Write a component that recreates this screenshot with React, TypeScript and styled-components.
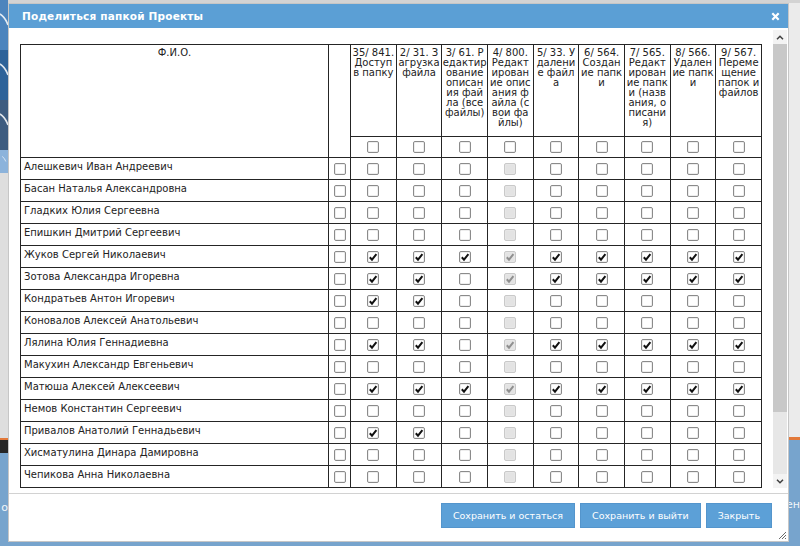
import React from "react";
import styled, { createGlobalStyle } from "styled-components";

const GlobalStyle = createGlobalStyle`
  html, body { margin: 0; padding: 0; }
  body {
    width: 800px;
    height: 546px;
    overflow: hidden;
    font-family: "DejaVu Sans", Verdana, sans-serif;
  }
`;

/* ---------- background page ---------- */

const Page = styled.div`
  position: relative;
  width: 800px;
  height: 546px;
  overflow: hidden;
  display: flex;
  background: #e9e9e9;
`;

const SideNav = styled.nav`
  width: 8px;
  display: flex;
  flex-direction: column;
`;

const NavBand = styled.div<{ $bg: string; $h?: number }>`
  flex: ${(p) => (p.$h ? "none" : "1")};
  height: ${(p) => (p.$h ? `${p.$h}px` : "auto")};
  background: ${(p) => p.$bg};
  overflow: hidden;
  display: flex;
  flex-direction: column;
  align-items: flex-end;
`;

const EdgeText = styled.span<{ $top: number }>`
  margin-top: ${(p) => p.$top}px;
  color: #f2f6fa;
  font-size: 11px;
  line-height: 12px;
  white-space: nowrap;
`;

const Workspace = styled.div`
  flex: 1;
  display: flex;
  flex-direction: column;
`;

const TopStrip = styled.div`
  height: 3px;
  background: #d3d3d3;
`;

const WorkArea = styled.div`
  flex: 1;
  background: #ebebeb;
`;

const AccentLine = styled.div`
  height: 3px;
  background: #e2793a;
`;

const BottomBand = styled.div`
  height: 106px;
  background: #77a4cd;
  display: flex;
  flex-direction: column;
  align-items: flex-end;
`;

const NavCurve = () => (
  <svg width="8" height="50" viewBox="0 0 8 50">
    <path d="M0 14 Q5 17 8 25" stroke="#ffffff" strokeWidth="1.6" fill="none" opacity="0.85" />
  </svg>
);

/* ---------- dialog ---------- */

const Dialog = styled.div`
  position: absolute;
  left: 8px;
  top: 3px;
  width: 781px;
  height: 539px;
  box-sizing: border-box;
  border: 1px solid #c6c6c6;
  background: #ffffff;
  display: flex;
  flex-direction: column;
`;

const TitleBar = styled.div`
  height: 24px;
  flex: none;
  background: #5b9fd5;
  display: flex;
  align-items: center;
  justify-content: space-between;
  padding: 0 8px 0 13px;
`;

const Title = styled.span`
  color: #ffffff;
  font-weight: bold;
  font-size: 10.5px;
  letter-spacing: 0.2px;
`;

const CloseButton = styled.span`
  display: flex;
  width: 9px;
  height: 9px;
`;

const Body = styled.div`
  flex: 1;
  min-height: 0;
  display: flex;
  padding: 2px 0 5px 0;
`;

const Viewport = styled.div`
  flex: 1;
  min-width: 0;
  overflow: hidden;
  padding: 14px 0 0 11px;
`;

const Scrollbar = styled.div`
  width: 14px;
  margin-right: 1px;
  display: flex;
  flex-direction: column;
  background: #e7e7e7;
`;

const ScrollButton = styled.div`
  height: 14px;
  flex: none;
  display: flex;
  align-items: center;
  justify-content: center;
  background: #f3f3f3;
`;

const Track = styled.div`
  flex: 1;
  display: flex;
  flex-direction: column;
`;

const Thumb = styled.div`
  height: 368px;
  background: #c8c8c8;
`;

const Footer = styled.div`
  height: 48px;
  flex: none;
  box-sizing: border-box;
  border-top: 1px solid #d2d2d2;
  display: flex;
  justify-content: flex-end;
  align-items: flex-start;
  gap: 5px;
  padding: 9px 16px 0 0;
`;

const Button = styled.button`
  height: 25px;
  box-sizing: border-box;
  border: 1px solid #5495cc;
  background: #5ca0d7;
  color: #ffffff;
  font-family: "DejaVu Sans", Verdana, sans-serif;
  font-size: 9.5px;
  padding: 0 11px;
  cursor: pointer;
`;

const Grip = styled.span`
  position: absolute;
  right: 1px;
  bottom: 1px;
  width: 10px;
  height: 10px;
  display: flex;
`;

/* ---------- table ---------- */

const Table = styled.table`
  border-collapse: collapse;
  table-layout: fixed;
  width: 742px;
  font-size: 10px;
  color: #222222;
`;

const Col = styled.col<{ $w?: number }>`
  width: ${(p) => (p.$w ? `${p.$w}px` : "auto")};
`;

const HeadCell = styled.th`
  border: 1px solid #252525;
  font-weight: normal;
  vertical-align: top;
  text-align: center;
  padding: 3px 0 0 0;
  line-height: 10px;
  white-space: nowrap;
  overflow: hidden;
`;

const TextHeadRow = styled.tr`
  height: 92px;
`;

const BoxRow = styled.tr`
  height: 21px;
`;

const BodyRow = styled.tr`
  height: 22px;
`;

const NameCell = styled.td`
  border: 1px solid #252525;
  padding: 2px 3px 0 3px;
  vertical-align: top;
  line-height: 13px;
  white-space: nowrap;
  overflow: hidden;
`;

const BoxCell = styled.td`
  border: 1px solid #252525;
  padding: 0;
  vertical-align: middle;
`;

const Box = styled.span<{ $disabled?: boolean }>`
  display: block;
  margin: 0 auto;
  width: 12px;
  height: 12px;
  box-sizing: border-box;
  border: 1px solid ${(p) => (p.$disabled ? "#c9c9c9" : "#8b8b8b")};
  border-radius: 2px;
  background: ${(p) => (p.$disabled ? "#e3e3e3" : "#ffffff")};
  box-shadow: inset 0 0 0 1px ${(p) => (p.$disabled ? "#e6e6e6" : "#eeeeee")};
`;

const Tick = styled.svg`
  display: block;
`;

const CheckBox = ({ checked, disabled }: { checked?: boolean; disabled?: boolean }) => (
  <Box $disabled={disabled}>
    {checked && (
      <Tick width="10" height="10" viewBox="0 0 10 10">
        <path
          d="M1.8 5.2 L4 7.6 L8.4 2.2"
          stroke={disabled ? "#8f8f8f" : "#111111"}
          strokeWidth="2"
          fill="none"
        />
      </Tick>
    )}
  </Box>
);

/* ---------- data ---------- */

const permissions: string[][] = [
  ["35/ 841.", "Доступ", "в папку"],
  ["2/ 31. З", "агрузка", "файла"],
  ["3/ 61. Р", "едактир", "ование", "описан", "ия фай", "ла (все", "файлы)"],
  ["4/ 800.", "Редакт", "ирован", "ие опис", "ания ф", "айла (с", "вои фа", "йлы)"],
  ["5/ 33. У", "далени", "е файл", "а"],
  ["6/ 564.", "Создан", "ие папк", "и"],
  ["7/ 565.", "Редакт", "ирован", "ие папк", "и (назв", "ания, о", "писани", "я)"],
  ["8/ 566.", "Удален", "ие папк", "и"],
  ["9/ 567.", "Переме", "щение", "папок и", "файлов"],
];

const FULL = [1, 2, 3, 4, 5, 6, 7, 8, 9];
const NO_OWN = [1, 2, 4, 5, 6, 7, 8, 9];
const DISABLED_COLUMN = 4;

const people: { name: string; on: number[] }[] = [
  { name: "Алешкевич Иван Андреевич", on: [] },
  { name: "Басан Наталья Александровна", on: [] },
  { name: "Гладких Юлия Сергеевна", on: [] },
  { name: "Епишкин Дмитрий Сергеевич", on: [] },
  { name: "Жуков Сергей Николаевич", on: FULL },
  { name: "Зотова Александра Игоревна", on: NO_OWN },
  { name: "Кондратьев Антон Игоревич", on: [1, 2] },
  { name: "Коновалов Алексей Анатольевич", on: [] },
  { name: "Лялина Юлия Геннадиевна", on: NO_OWN },
  { name: "Макухин Александр Евгеньевич", on: [] },
  { name: "Матюша Алексей Алексеевич", on: FULL },
  { name: "Немов Константин Сергеевич", on: [] },
  { name: "Привалов Анатолий Геннадьевич", on: [1, 2] },
  { name: "Хисматулина Динара Дамировна", on: [] },
  { name: "Чепикова Анна Николаевна", on: [] },
];

const Chevron = ({ up }: { up?: boolean }) => (
  <svg width="8" height="5" viewBox="0 0 8 5">
    <path
      d={up ? "M1 4.2 L4 1.2 L7 4.2" : "M1 0.8 L4 3.8 L7 0.8"}
      stroke="#404040"
      strokeWidth="1.5"
      fill="none"
    />
  </svg>
);

export default function App() {
  return (
    <>
      <GlobalStyle />
      <Page>
        <SideNav>
          <NavBand $bg="#4c84bd" $h={50}>
            <NavCurve />
          </NavBand>
          <NavBand $bg="#2e6399" $h={50}>
            <NavCurve />
          </NavBand>
          <NavBand $bg="#3d5c80" $h={50}>
            <NavCurve />
          </NavBand>
          <NavBand $bg="#8cb3db" $h={23}>
            <NavCurve />
          </NavBand>
          <NavBand $bg="#dedede" />
          <NavBand $bg="#e2793a" $h={2} />
          <NavBand $bg="#262626" $h={13} />
          <NavBand $bg="#77a4cd" $h={93}>
            <EdgeText $top={49}>о</EdgeText>
          </NavBand>
        </SideNav>
        <Workspace>
          <TopStrip />
          <WorkArea />
          <AccentLine />
          <BottomBand>
            <EdgeText $top={59}>ен</EdgeText>
          </BottomBand>
        </Workspace>

        <Dialog>
          <TitleBar>
            <Title>Поделиться папкой Проекты</Title>
            <CloseButton>
              <svg width="9" height="9" viewBox="0 0 9 9">
                <path d="M1.3 1.3 L7.7 7.7 M7.7 1.3 L1.3 7.7" stroke="#ffffff" strokeWidth="2.2" />
              </svg>
            </CloseButton>
          </TitleBar>
          <Body>
            <Viewport>
              <Table>
                <colgroup>
                  <Col $w={308} />
                  <Col $w={22} />
                  {permissions.map((_, i) => (
                    <Col key={i} />
                  ))}
                </colgroup>
                <thead>
                  <TextHeadRow>
                    <HeadCell rowSpan={2}>Ф.И.О.</HeadCell>
                    <HeadCell rowSpan={2} />
                    {permissions.map((lines, i) => (
                      <HeadCell key={i}>
                        {lines.map((l, j) => (
                          <React.Fragment key={j}>
                            {j > 0 && <br />}
                            {l}
                          </React.Fragment>
                        ))}
                      </HeadCell>
                    ))}
                  </TextHeadRow>
                  <BoxRow>
                    {permissions.map((_, i) => (
                      <BoxCell key={i}>
                        <CheckBox />
                      </BoxCell>
                    ))}
                  </BoxRow>
                </thead>
                <tbody>
                  {people.map((p) => (
                    <BodyRow key={p.name}>
                      <NameCell>{p.name}</NameCell>
                      <BoxCell>
                        <CheckBox />
                      </BoxCell>
                      {permissions.map((_, i) => (
                        <BoxCell key={i}>
                          <CheckBox
                            checked={p.on.includes(i + 1)}
                            disabled={i + 1 === DISABLED_COLUMN}
                          />
                        </BoxCell>
                      ))}
                    </BodyRow>
                  ))}
                </tbody>
              </Table>
            </Viewport>
            <Scrollbar>
              <ScrollButton>
                <Chevron up />
              </ScrollButton>
              <Track>
                <Thumb />
              </Track>
              <ScrollButton>
                <Chevron />
              </ScrollButton>
            </Scrollbar>
          </Body>
          <Footer>
            <Button>Сохранить и остаться</Button>
            <Button>Сохранить и выйти</Button>
            <Button>Закрыть</Button>
          </Footer>
          <Grip>
            <svg width="10" height="10" viewBox="0 0 10 10">
              <path d="M9 2 L2 9 M9 5 L5 9 M9 8 L8 9" stroke="#6b6b6b" strokeWidth="1" />
            </svg>
          </Grip>
        </Dialog>
      </Page>
    </>
  );
}
